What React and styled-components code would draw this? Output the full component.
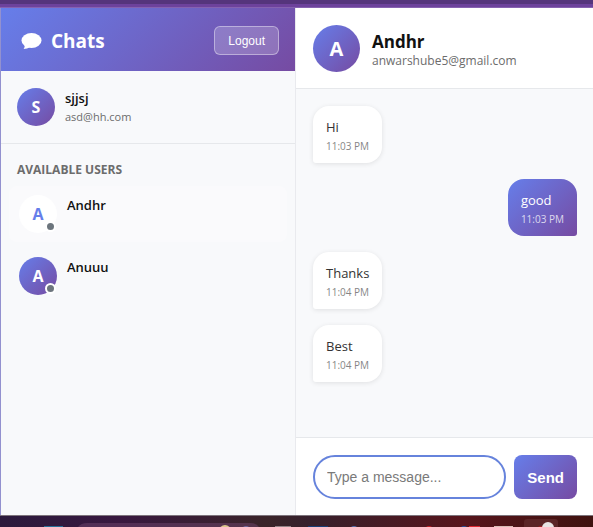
import React, { useState } from "react";
import styled, { createGlobalStyle, css } from "styled-components";

const brand = "linear-gradient(135deg, #667eea 0%, #764ba2 100%)";

const GlobalStyle = createGlobalStyle`
  *, *::before, *::after { box-sizing: border-box; }
  body {
    margin: 0;
    font-family: "Segoe UI", "Open Sans", "Noto Sans", sans-serif;
    color: #111;
  }
  h1, h2, h3, p, ul, ol { margin: 0; padding: 0; }
  ul, ol { list-style: none; }
`;

const Screen = styled.div`
  display: flex;
  flex-direction: column;
  height: 100vh;
  overflow: hidden;
`;

const TopStrip = styled.div`
  flex: none;
  height: 8px;
  background: #6d429c;
  border-top: 4px solid #55357c;
  border-bottom: 1px solid #8662b0;
`;

const Workspace = styled.div`
  flex: 1;
  display: flex;
  min-height: 0;
`;

const Sidebar = styled.aside`
  flex: none;
  width: 296px;
  display: flex;
  flex-direction: column;
  background: #f8f9fb;
  border-left: 1px solid #9391cf;
  border-right: 1px solid #e9eaee;
`;

const SidebarHeader = styled.header`
  display: flex;
  align-items: center;
  justify-content: space-between;
  padding: 18px 16px 16px 19px;
  background: ${brand};
  color: #fff;
`;

const Brand = styled.h1`
  display: flex;
  align-items: center;
  gap: 8px;
  font-size: 19px;
  line-height: 24px;
  font-weight: 700;
`;

const LogoutButton = styled.button`
  height: 29px;
  padding: 0 13px;
  border: 1px solid rgba(255, 255, 255, 0.4);
  border-radius: 6px;
  background: rgba(255, 255, 255, 0.2);
  color: #fff;
  font: 12px "Liberation Sans", Arial, sans-serif;
`;

const Profile = styled.section`
  display: flex;
  align-items: center;
  gap: 10px;
  padding: 17px 16px;
  border-bottom: 1px solid #e6e8eb;
`;

const Avatar = styled.div`
  position: relative;
  flex: none;
  display: grid;
  place-items: center;
  width: ${(p) => (p.$large ? 47 : 38)}px;
  height: ${(p) => (p.$large ? 47 : 38)}px;
  border-radius: 50%;
  background: ${(p) => (p.$light ? "#fff" : brand)};
  color: ${(p) => (p.$light ? "#667eea" : "#fff")};
  font-size: ${(p) => (p.$large ? 20 : 16)}px;
  font-weight: 700;
`;

const StatusDot = styled.span`
  position: absolute;
  right: 1px;
  bottom: 1px;
  width: 11px;
  height: 11px;
  border: 2px solid #fff;
  border-radius: 50%;
  background: #6c757d;
`;

const Name = styled.h3`
  font-size: ${(p) => (p.$large ? 17 : 13)}px;
  line-height: 20px;
  font-weight: ${(p) => (p.$large ? 700 : 600)};
  color: #111;
`;

const Email = styled.p`
  font-size: ${(p) => (p.$large ? 12 : 11)}px;
  line-height: 18px;
  color: #6c6c6c;
`;

const SectionTitle = styled.h2`
  padding: 17px 16px 8px;
  font-size: 12px;
  line-height: 17px;
  font-weight: 700;
  color: #6c6c6c;
  text-transform: uppercase;
`;

const UserList = styled.ul`
  display: flex;
  flex-direction: column;
  gap: 6px;
  padding: 0 8px;
`;

const UserButton = styled.button`
  display: flex;
  align-items: flex-start;
  gap: 10px;
  width: 100%;
  padding: 9px 10px;
  border: 0;
  border-radius: 8px;
  background: ${(p) => (p.$active ? "#fafafc" : "transparent")};
  font-family: inherit;
  text-align: left;
`;

const Chat = styled.main`
  flex: 1;
  min-width: 0;
  display: flex;
  flex-direction: column;
  background: #f8f9fb;
`;

const ChatHeader = styled.header`
  display: flex;
  align-items: center;
  gap: 12px;
  padding: 17px 17px 16px;
  background: #fff;
  border-bottom: 1px solid #e6e8eb;
`;

const Contact = styled.div`
  padding-top: ${(p) => (p.$large ? 4 : 0)}px;
`;

const Messages = styled.ol`
  flex: 1;
  min-height: 0;
  display: flex;
  flex-direction: column;
  align-items: flex-start;
  gap: 16px;
  padding: 17px 16px 17px 17px;
`;

const Bubble = styled.li`
  flex: none;
  padding: 11px 13px 8px;
  border-radius: 16px 16px 16px 3px;
  background: #fff;
  color: #333;
  box-shadow: 0 1px 5px rgba(0, 0, 0, 0.1);
  font-size: 13px;
  line-height: 20px;

  ${(p) =>
    p.$own &&
    css`
      align-self: flex-end;
      border-radius: 16px 16px 3px 16px;
      background: ${brand};
      color: #fff;
      box-shadow: none;
    `}
`;

const Time = styled.time`
  display: block;
  font-size: 10px;
  line-height: 18px;
  opacity: ${(p) => (p.$own ? 0.75 : 0.6)};
`;

const Composer = styled.form`
  display: flex;
  gap: 8px;
  padding: 17px 16px 16px 17px;
  background: #fff;
  border-top: 1px solid #e6e8eb;
`;

const MessageInput = styled.input`
  flex: 1;
  min-width: 0;
  height: 44px;
  padding: 0 12px;
  border: 2px solid #6683dc;
  border-radius: 22px;
  outline: 0;
  background: #fff;
  color: #333;
  font: 14px "Liberation Sans", Arial, sans-serif;
  &::placeholder { color: #7a7a7a; }
`;

const SendButton = styled.button`
  height: 44px;
  padding: 0 13px;
  border: 0;
  border-radius: 8px;
  background: ${brand};
  color: #fff;
  font: 700 15px "Liberation Sans", Arial, sans-serif;
`;

const Taskbar = styled.footer`
  flex: none;
  height: 12px;
  overflow: hidden;
  background: linear-gradient(90deg, #2b1a3c 0%, #38183f 20%, #3a2429 45%, #36202c 52%, #57151c 78%, #3f120f 100%);
  border-top: 1px solid #7d747c;
  svg { display: block; width: 100%; height: 11px; }
`;

const users = [
  { name: "Andhr", active: true },
  { name: "Anuuu", active: false },
];

const messages = [
  { text: "Hi", time: "11:03 PM" },
  { text: "good", time: "11:03 PM", own: true },
  { text: "Thanks", time: "11:04 PM" },
  { text: "Best", time: "11:04 PM" },
];

function SpeechIcon() {
  return (
    <svg width="23" height="18" viewBox="0 0 23 18" aria-hidden="true">
      <ellipse cx="11.500" cy="8.500" rx="10" ry="7.500" fill="#fff" />
      <path fill="#fff" d="M4.500 11.500C5 14 4.600 15.700 3.600 17C6 17 8.300 16.300 10 15z" />
    </svg>
  );
}

function TaskbarIcons() {
  return (
    <svg viewBox="0 0 593 11" preserveAspectRatio="none" aria-hidden="true">
      <path d="M78 11q3-4 9-4h163q6 0 9 4z" fill="#70456e" opacity=".5" />
      <rect x="44" y="10" width="19" height="1" fill="#276f98" />
      <circle cx="225" cy="15" r="6" fill="#dbc68b" />
      <circle cx="246" cy="15" r="5" fill="#716aa0" />
      <rect x="275" y="10" width="16" height="1" fill="#928286" />
      <rect x="308" y="10" width="20" height="1" fill="#183d76" />
      <circle cx="354" cy="15" r="5" fill="#536fb0" />
      <circle cx="429" cy="15" r="5" fill="#c52127" />
      <circle cx="464" cy="15" r="5" fill="#2351a0" />
      <rect x="469" y="10" width="11" height="1" fill="#dc2630" />
      <rect x="494" y="10" width="19" height="1" fill="#d8bbb5" />
      <rect x="524" y="3" width="34" height="12" rx="3" fill="#5b2426" />
      <circle cx="541" cy="14" r="4" fill="#a51d20" />
      <circle cx="548" cy="12" r="6" fill="#e8e4e4" />
    </svg>
  );
}

export default function App() {
  const [draft, setDraft] = useState("");
  return (
    <Screen>
      <GlobalStyle />
      <TopStrip />
      <Workspace>
        <Sidebar>
          <SidebarHeader>
            <Brand>
              <SpeechIcon />
              Chats
            </Brand>
            <LogoutButton type="button">Logout</LogoutButton>
          </SidebarHeader>
          <Profile>
            <Avatar>S</Avatar>
            <Contact>
              <Name>sjjsj</Name>
              <Email>asd@hh.com</Email>
            </Contact>
          </Profile>
          <SectionTitle>Available Users</SectionTitle>
          <UserList>
            {users.map((u) => (
              <li key={u.name}>
                <UserButton type="button" $active={u.active}>
                  <Avatar $light={u.active}>
                    {u.name[0]}
                    <StatusDot />
                  </Avatar>
                  <Name as="span">{u.name}</Name>
                </UserButton>
              </li>
            ))}
          </UserList>
        </Sidebar>
        <Chat>
          <ChatHeader>
            <Avatar $large>A</Avatar>
            <Contact $large>
              <Name $large>Andhr</Name>
              <Email $large>anwarshube5@gmail.com</Email>
            </Contact>
          </ChatHeader>
          <Messages>
            {messages.map((m) => (
              <Bubble key={m.text} $own={m.own}>
                <p>{m.text}</p>
                <Time $own={m.own}>{m.time}</Time>
              </Bubble>
            ))}
          </Messages>
          <Composer onSubmit={(e) => e.preventDefault()}>
            <MessageInput
              aria-label="Message"
              placeholder="Type a message..."
              value={draft}
              onChange={(e) => setDraft(e.target.value)}
            />
            <SendButton type="submit">Send</SendButton>
          </Composer>
        </Chat>
      </Workspace>
      <Taskbar>
        <TaskbarIcons />
      </Taskbar>
    </Screen>
  );
}
